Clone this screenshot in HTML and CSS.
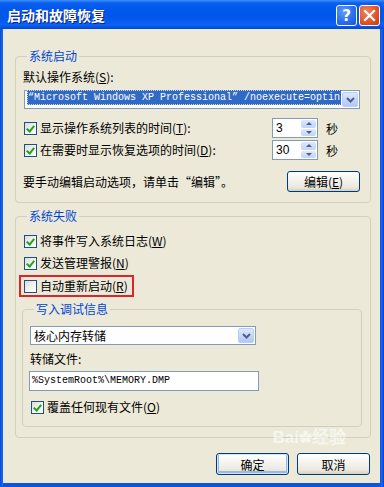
FILE: index.html
```html
<!DOCTYPE html>
<html lang="zh-CN">
<head>
    <meta charset="UTF-8">
    <title>启动和故障恢复</title>
    <link rel="stylesheet" href="styles.css">
</head>
<body>
<div class="window">
    <div class="titlebar">
        <span class="title">启动和故障恢复</span>
        <div class="caption-buttons">
            <span class="cap help">?</span>
            <span class="cap close">
                <svg width="13" height="13" viewBox="0 0 13 13"><path d="M2 2 L11 11 M11 2 L2 11" stroke="#fff" stroke-width="2.2" stroke-linecap="square"/></svg>
            </span>
        </div>
    </div>

    <div class="client">
        <fieldset class="group startup">
            <legend>系统启动</legend>
            <div class="label">默认操作系统(<u>S</u>):</div>
            <div class="combo os-combo">
                <div class="combo-value mono"><span class="selected">“Microsoft Windows XP Professional” /noexecute=optin</span></div>
                <span class="drop"><svg width="9" height="6" viewBox="0 0 9 6"><path d="M1 1 L4.5 4.5 L8 1" fill="none" stroke="#4d6185" stroke-width="2"/></svg></span>
            </div>

            <div class="spin-row">
                <label class="check"><span class="box checked"></span>显示操作系统列表的时间(<u>T</u>):</label>
                <div class="spin">
                    <span class="spin-value">3</span>
                    <span class="spin-btns"><span class="arrow up"></span><span class="arrow down"></span></span>
                </div>
                <span class="unit">秒</span>
            </div>
            <div class="spin-row">
                <label class="check"><span class="box checked"></span>在需要时显示恢复选项的时间(<u>D</u>):</label>
                <div class="spin">
                    <span class="spin-value">30</span>
                    <span class="spin-btns"><span class="arrow up"></span><span class="arrow down"></span></span>
                </div>
                <span class="unit">秒</span>
            </div>

            <div class="edit-row">
                <span>要手动编辑启动选项，请单击“编辑”。</span>
                <span class="btn edit-btn">编辑(<u>E</u>)</span>
            </div>
        </fieldset>

        <fieldset class="group failure">
            <legend>系统失败</legend>
            <label class="check row"><span class="box checked"></span>将事件写入系统日志(<u>W</u>)</label>
            <label class="check row"><span class="box checked"></span>发送管理警报(<u>N</u>)</label>
            <label class="check row marked"><span class="box"></span>自动重新启动(<u>R</u>)</label>

            <fieldset class="group debug">
                <legend>写入调试信息</legend>
                <div class="combo dump-combo">
                    <div class="combo-value">核心内存转储</div>
                    <span class="drop"><svg width="9" height="6" viewBox="0 0 9 6"><path d="M1 1 L4.5 4.5 L8 1" fill="none" stroke="#4d6185" stroke-width="2"/></svg></span>
                </div>
                <div class="label dump-label">转储文件:</div>
                <div class="textbox mono">%SystemRoot%\MEMORY.DMP</div>
                <label class="check row overwrite"><span class="box checked"></span>覆盖任何现有文件(<u>O</u>)</label>
            </fieldset>
        </fieldset>

        <div class="actions">
            <span class="btn default">确定</span>
            <span class="btn">取消</span>
        </div>
        <span class="watermark">Bai<span class="paw">&#10047;</span>经验</span>
    </div>
</div>
</body>
</html>
```

FILE: styles.css
```css
body {
    margin: 0;
    padding: 0;
    width: 384px;
    height: 487px;
    overflow: hidden;
    font-family: "Noto Sans CJK SC", "DejaVu Sans", sans-serif;
    font-size: 12px;
    color: #000;
}
.window {
    display: flex;
    flex-direction: column;
    height: 487px;
    background: linear-gradient(90deg, #0842d8 0, #166aee 2px, #0a53e3 4px, #0a53e3 380px, #166aee 382px, #0831d9 384px);
}
.titlebar {
    height: 29px;
    display: flex;
    align-items: center;
    justify-content: space-between;
    padding: 0 4px 0 7px;
    background: linear-gradient(180deg, #3d8ff9 0, #0a60f0 3px, #0058ee 8px, #0056e8 18px, #0a62f6 25px, #0046d5 29px);
}
.title {
    color: #fff;
    font-weight: bold;
    font-size: 14px;
    text-shadow: 1px 1px 0 #0a1e78;
}
.caption-buttons {
    display: flex;
    gap: 2px;
    padding-top: 2px;
}
.cap {
    width: 21px;
    height: 21px;
    box-sizing: border-box;
    border: 1px solid #fff;
    border-radius: 3px;
    display: flex;
    align-items: center;
    justify-content: center;
    color: #fff;
}
.help {
    background: radial-gradient(circle at 35% 30%, #5f9bff 0, #2a6ff0 55%, #1c55d8 100%);
    font-family: "DejaVu Sans", sans-serif;
    font-weight: bold;
    font-size: 15px;
}
.close {
    background: radial-gradient(circle at 35% 30%, #f0835c 0, #e2562c 55%, #c53a16 100%);
}
.client {
    flex: 1;
    margin: 0 4px 4px 3px;
    padding: 20px 9px 0 12px;
    background: #ece9d8;
    position: relative;
}
.group {
    margin: 0;
    border: 1px solid #d0d0bf;
    border-radius: 4px;
    min-width: 0;
}
.group legend {
    color: #0046d5;
    line-height: 14px;
    padding: 0 2px;
    margin-left: 4px;
}
.startup {
    padding: 7px 10px 10px 7px;
}
.label {
    line-height: 14px;
}
u {
    text-decoration: underline;
}
.mono {
    font-family: "Liberation Mono", "DejaVu Sans Mono", monospace;
    font-size: 10px;
}
.combo {
    display: flex;
    align-items: center;
    height: 19px;
    box-sizing: border-box;
    border: 1px solid #7f9db9;
    background: #fff;
    padding: 1px;
}
.combo-value {
    flex: 1;
    overflow: hidden;
    white-space: nowrap;
    line-height: 15px;
    padding-left: 2px;
}
.os-combo {
    margin: 6px 0 0 1px;
}
.os-combo .combo-value {
    padding-left: 1px;
}
.selected {
    display: inline-block;
    background: #316ac5;
    color: #fff;
    outline: 1px dotted #cfd9f0;
    outline-offset: -1px;
    padding: 0 1px;
    width: 313px;
    overflow: hidden;
}
.drop {
    width: 16px;
    height: 15px;
    margin-left: 1px;
    border-radius: 2px;
    background: linear-gradient(180deg, #dfe8fd 0, #c2d3fb 60%, #b4c8f6 100%);
    border: 1px solid #b9cdfa;
    box-sizing: border-box;
    display: flex;
    align-items: center;
    justify-content: center;
}
.spin-row {
    display: grid;
    grid-template-columns: 1fr 46px 42px;
    align-items: center;
    height: 20px;
    margin-top: 2px;
}
.os-combo + .spin-row {
    margin-top: 9px;
}
.check {
    display: flex;
    align-items: center;
    line-height: 16px;
    white-space: nowrap;
}
.box {
    width: 13px;
    height: 13px;
    box-sizing: border-box;
    border: 1px solid #1c5180;
    background: linear-gradient(135deg, #dcdcd7 0, #f5f5f1 60%, #fff 100%);
    margin: 0 3px 0 1px;
    position: relative;
    flex: none;
}
.box.checked::after {
    content: "";
    position: absolute;
    left: 3px;
    top: 1px;
    width: 3px;
    height: 6px;
    border: solid #21a121;
    border-width: 0 2px 2px 0;
    transform: rotate(40deg);
}
.spin {
    display: flex;
    height: 20px;
    box-sizing: border-box;
    border: 1px solid #7f9db9;
    background: #fff;
    padding: 1px;
}
.spin-value {
    flex: 1;
    line-height: 16px;
    padding-left: 2px;
    font-family: "Liberation Sans", sans-serif;
}
.spin-btns {
    width: 15px;
    display: flex;
    flex-direction: column;
    gap: 1px;
}
.arrow {
    flex: 1;
    border-radius: 2px;
    background: linear-gradient(180deg, #dfe8fd 0, #c2d3fb 100%);
    display: flex;
    align-items: center;
    justify-content: center;
}
.arrow::before {
    content: "";
    width: 0;
    height: 0;
    border-left: 3px solid transparent;
    border-right: 3px solid transparent;
}
.arrow.up::before {
    border-bottom: 3px solid #4d6185;
}
.arrow.down::before {
    border-top: 3px solid #4d6185;
}
.unit {
    padding-left: 8px;
}
.edit-row {
    display: flex;
    align-items: center;
    justify-content: space-between;
    margin-top: 11px;
    height: 21px;
}
.btn {
    display: inline-flex;
    align-items: center;
    justify-content: center;
    height: 21px;
    box-sizing: border-box;
    border: 1px solid #003c74;
    border-radius: 3px;
    background: linear-gradient(180deg, #ffffff 0, #f4f4f0 40%, #ebe8de 80%, #d6d0c5 100%);
}
.edit-btn {
    width: 73px;
}
.failure {
    margin-top: 6px;
    padding: 10px 8px 10px 7px;
}
.row {
    height: 16px;
    margin-top: 6px;
}
.failure > .row:first-of-type {
    margin-top: 0;
}
.marked {
    display: inline-flex;
    border: 2px solid #d9262b;
    margin: 4px 0 0 -4px;
    padding: 1px 4px 1px 2px;
}
.debug {
    margin: 5px 0 0 -1px;
    padding: 10px 8px 11px 7px;
}
.dump-combo {
    width: 226px;
}
.dump-label {
    margin-top: 7px;
}
.textbox {
    width: 230px;
    height: 20px;
    box-sizing: border-box;
    margin: 5px 0 0 -1px;
    border: 1px solid #7f9db9;
    background: #fff;
    line-height: 18px;
    padding-left: 2px;
}
.overwrite {
    margin-top: 8px;
}
.actions {
    display: flex;
    justify-content: flex-end;
    gap: 8px;
    margin: 15px 1px 0 0;
}
.actions .btn {
    width: 73px;
    height: 22px;
}
.btn.default {
    box-shadow: inset 0 0 0 1px #cee7ff, inset 0 -1px 0 2px #98b8ea;
}
.watermark {
    position: absolute;
    right: 34px;
    bottom: 36px;
    color: rgba(255, 255, 255, 0.6);
    font-family: "Liberation Sans", sans-serif;
    font-weight: bold;
    font-size: 17px;
    line-height: 18px;
    pointer-events: none;
}
.paw {
    font-size: 13px;
    vertical-align: top;
}
```
